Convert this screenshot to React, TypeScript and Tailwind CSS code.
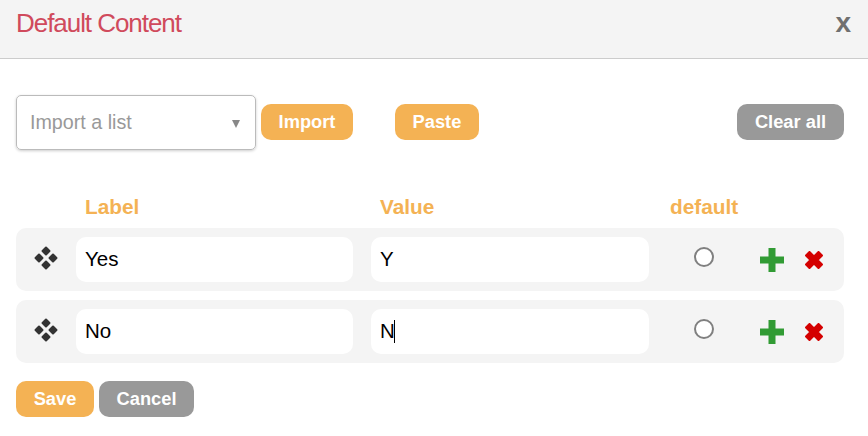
const font = "font-['Liberation_Sans',Arial,sans-serif]";

function MoveIcon() {
  return (
    <svg width="24" height="24" viewBox="0 0 24 24" className="mb-[3px] text-[#333] blur-[0.6px]" fill="currentColor" stroke="currentColor" strokeWidth="2" strokeLinejoin="round">
      <path d="M12 1.5 15.5 5 12 8.5 8.5 5Z" />
      <path d="M12 15.5 15.5 19 12 22.5 8.5 19Z" />
      <path d="M5 8.5 8.5 12 5 15.5 1.5 12Z" />
      <path d="M19 8.5 22.5 12 19 15.5 15.5 12Z" />
    </svg>
  );
}

function PlusIcon() {
  return (
    <svg width="24" height="24" viewBox="0 0 24 24" className="blur-[0.3px]">
      <path d="M8.5 0H15.5V8.5H24V15.5H15.5V24H8.5V15.5H0V8.5H8.5Z" fill="#319b34" />
    </svg>
  );
}

function CrossIcon() {
  return (
    <svg width="20" height="20" viewBox="0 0 20 20" className="blur-[0.3px]">
      <path
        d="M5.5 2 10 6.5 14.5 2 18 5.5 13.5 10 18 14.5 14.5 18 10 13.5 5.5 18 2 14.5 6.5 10 2 5.5Z"
        fill="#d40000"
        stroke="#d40000"
        strokeWidth="2"
        strokeLinejoin="round"
      />
    </svg>
  );
}

function Row({ label, value, caret }: { label: string; value: string; caret?: boolean }) {
  return (
    <div className="flex h-[63px] items-center rounded-[10px] bg-[#f4f4f4] pl-[18px]">
      <MoveIcon />
      <div className="ml-[18px] flex h-[45px] w-[277px] items-center rounded-[10px] bg-white pl-[9px] text-[20.5px] text-black">
        {label}
      </div>
      <div className="ml-[18px] flex h-[45px] w-[278px] items-center rounded-[10px] bg-white pl-[9px] text-[20.5px] text-black">
        {value}
        {caret && <span className="-ml-px h-[23px] w-px bg-black" />}
      </div>
      <span className="mb-[5px] ml-[45px] h-[20px] w-[20px] rounded-full border-2 border-[#808080] bg-white" />
      <span className="ml-[46px] flex">
        <PlusIcon />
      </span>
      <span className="ml-[20px] flex">
        <CrossIcon />
      </span>
    </div>
  );
}

export default function App() {
  return (
    <div className={`${font} h-[436px] w-[868px] overflow-hidden bg-white`}>
      {/* HEADER */}
      <div className="flex h-[59px] items-start justify-between border-b border-[#ccc] bg-[#f4f4f4] pl-4 pr-[17px]">
        <h1 className="mt-[7px] text-[26px] leading-[32px] tracking-[-1.05px] text-[#d04a5c]">
          Default Content
        </h1>
        <span className="mt-[7px] text-[28px] font-bold leading-[32px] text-[#707070]">x</span>
      </div>

      <div className="pl-4 pr-6">
        {/* TOOLBAR */}
        <div className="mt-9 flex h-[55px] items-center">
          <div className="flex h-[55px] w-[240px] items-center justify-between rounded-[5px] border border-[#bbb] pl-[13px] pr-[15px] shadow-[0_1px_3px_rgba(0,0,0,0.2)]">
            <span className="text-[19.7px] text-[#999]">Import a list</span>
            <span className="mt-0.5 h-0 w-0 border-x-[4.5px] border-t-[8px] border-x-transparent border-t-[#888]" />
          </div>
          <button className="mb-0.5 ml-[5px] h-9 w-[92px] rounded-[10px] bg-[#f4b254] text-[18.3px] font-bold text-white">
            Import
          </button>
          <button className="mb-0.5 ml-[42px] h-9 w-[84px] rounded-[10px] bg-[#f4b254] text-[18.3px] font-bold text-white">
            Paste
          </button>
          <button className="mb-0.5 ml-auto h-9 w-[107px] rounded-[10px] bg-[#999] text-[18.3px] font-bold text-white">
            Clear all
          </button>
        </div>

        {/* COLUMN HEADINGS */}
        <div className="mt-[45px] flex h-[24px] items-center text-[20.8px] font-bold text-[#f4b254]">
          <span className="ml-[69px] w-[295px]">Label</span>
          <span className="w-[290px]">Value</span>
          <span>default</span>
        </div>

        {/* ROWS */}
        <div className="mt-[9px] flex flex-col gap-[9px]">
          <Row label="Yes" value="Y" />
          <Row label="No" value="N" caret />
        </div>

        {/* FOOTER */}
        <div className="mt-[18px] flex gap-[5px]">
          <button className="h-9 w-[78px] rounded-[10px] bg-[#f4b254] text-[18.3px] font-bold text-white">
            Save
          </button>
          <button className="h-9 w-[95px] rounded-[10px] bg-[#999] text-[18.3px] font-bold text-white">
            Cancel
          </button>
        </div>
      </div>
    </div>
  );
}
